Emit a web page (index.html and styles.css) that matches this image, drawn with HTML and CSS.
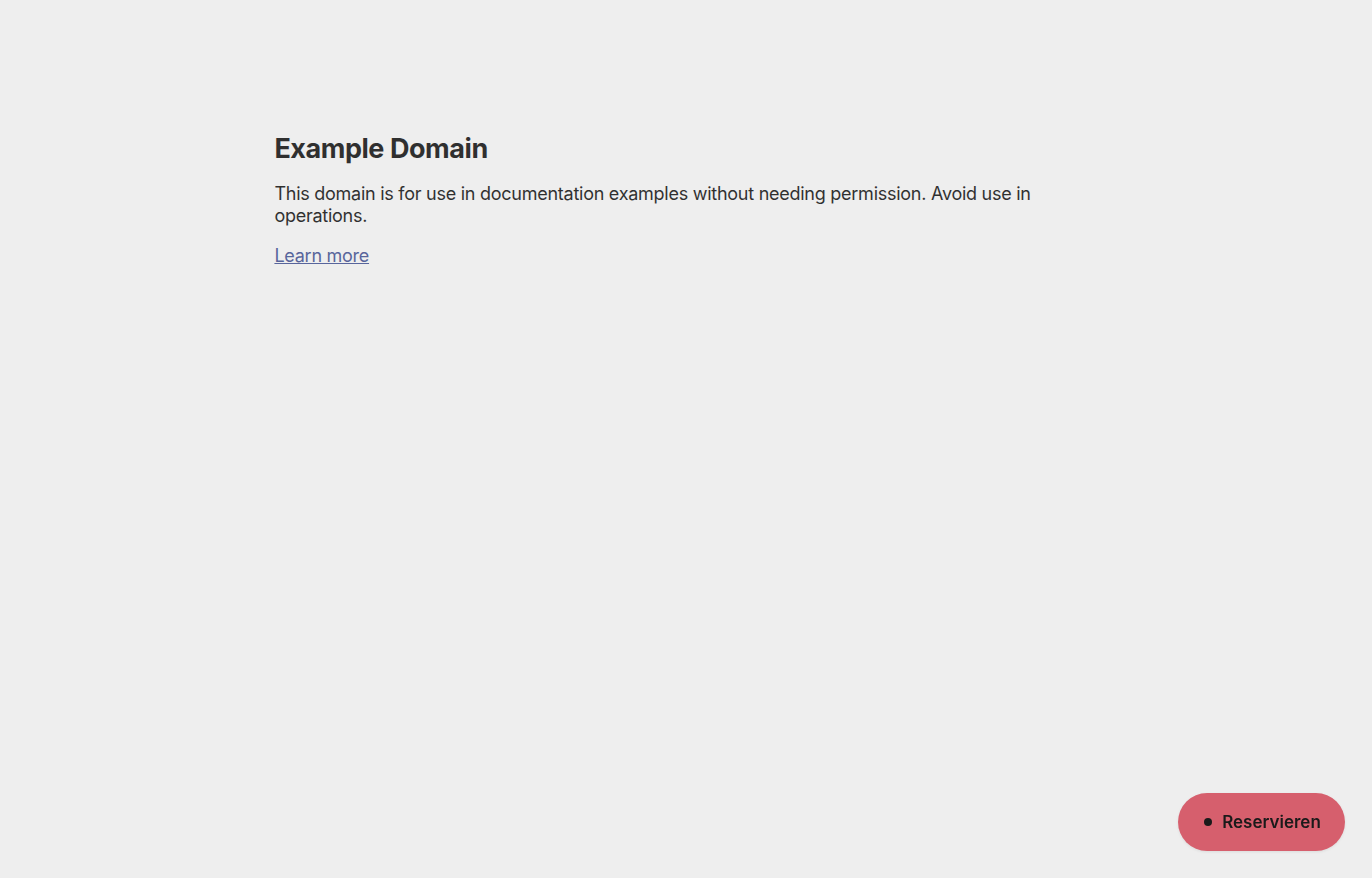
FILE: index.html
```html
<!doctype html>
<html lang="en">
<head>
<meta charset="utf-8">
<title>Example Domain</title>
<link rel="stylesheet" href="styles.css">
</head>
<body>
<div class="content">
  <h1>Example Domain</h1>
  <p>This domain is for use in documentation examples without needing permission. Avoid use in operations.</p>
  <p><a href="#">Learn more</a></p>
</div>
<button class="reserve"><span class="dot"></span>Reservieren</button>
</body>
</html>
```
FILE: styles.css
```css
html { background: #eeeeee; }
body {
  background: #eeeeee;
  width: 60vw;
  margin: 15vh auto;
  font-family: Inter, "Liberation Sans", sans-serif;
  font-size: 18px;
  color: #000;
}
.content { opacity: 0.8; }
h1 {
  font-size: 27px;
  font-weight: 700;
  margin: 0 0 18px;
  line-height: 33px;
  letter-spacing: -0.45px;
}
p {
  margin: 0 0 18px;
  line-height: 22px;
  letter-spacing: -0.26px;
}
a:link, a:visited { color: #334488; }
.reserve {
  position: fixed;
  right: 27px;
  bottom: 27px;
  width: 167px;
  height: 58px;
  border: none;
  border-radius: 29px;
  background: #d65f6d;
  box-shadow: 0 1px 3px rgba(0,0,0,0.08);
  display: flex;
  align-items: center;
  justify-content: center;
  gap: 10px;
  font-family: Inter, "Liberation Sans", sans-serif;
  font-size: 17px;
  font-weight: 600;
  color: #1a1a1a;
  padding: 0 0 0 2px;
}
.dot {
  width: 8px;
  height: 8px;
  border-radius: 50%;
  background: #1a1a1a;
}
```
